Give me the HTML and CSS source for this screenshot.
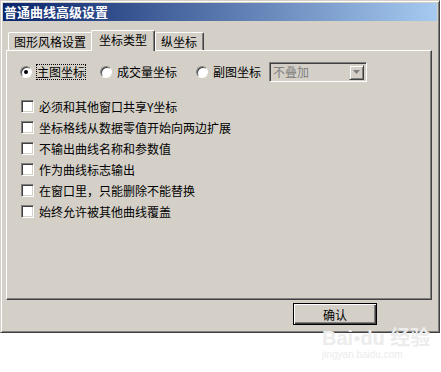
FILE: index.html
```html
<!DOCTYPE html>
<html lang="zh">
<head>
<meta charset="utf-8">
<link rel="stylesheet" href="styles.css">
</head>
<body>
<div class="window">
  <div class="titlebar">普通曲线高级设置</div>
  <div class="body">
    <div class="tabs">
      <div class="tab">图形风格设置</div>
      <div class="tab active">坐标类型</div>
      <div class="tab">纵坐标</div>
    </div>
    <div class="panel">
      <div class="radio-row">
        <label class="radio checked"><span class="dot"></span><span class="lbl focus">主图坐标</span></label>
        <label class="radio"><span class="dot"></span><span class="lbl">成交量坐标</span></label>
        <label class="radio"><span class="dot"></span><span class="lbl">副图坐标</span></label>
        <div class="select">
          <span class="sel-text">不叠加</span>
          <span class="sel-btn"><svg width="7" height="4" viewBox="0 0 7 4"><path d="M0 0h7L3.5 4z" fill="#808080"/></svg></span>
        </div>
      </div>
      <div class="checks">
        <label class="check"><span class="box"></span>必须和其他窗口共享Y坐标</label>
        <label class="check"><span class="box"></span>坐标格线从数据零值开始向两边扩展</label>
        <label class="check"><span class="box"></span>不输出曲线名称和参数值</label>
        <label class="check"><span class="box"></span>作为曲线标志输出</label>
        <label class="check"><span class="box"></span>在窗口里，只能删除不能替换</label>
        <label class="check"><span class="box"></span>始终允许被其他曲线覆盖</label>
      </div>
    </div>
    <div class="footer">
      <button class="btn">确认</button>
    </div>
  </div>
</div>
<div class="watermark">
  <div class="wm-logo">Bai<span class="paw">●</span>du 经验</div>
  <div class="wm-url">jingyan.baidu.com</div>
</div>
</body>
</html>
```
FILE: styles.css
```css
html, body {
  margin: 0;
  padding: 0;
  background: #ffffff;
  width: 441px;
  height: 372px;
  overflow: hidden;
  font-family: "Noto Sans CJK SC", "DejaVu Sans", sans-serif;
  font-size: 12px;
  color: #000;
  position: relative;
}

.window {
  width: 440px;
  height: 333px;
  box-sizing: border-box;
  background: #d4d0c8;
  border: 1px solid;
  border-color: #d4d0c8 #404040 #404040 #d4d0c8;
  box-shadow: inset 1px 1px #ffffff, inset -1px -1px #808080;
  padding: 2px;
  display: flex;
  flex-direction: column;
}

.titlebar {
  height: 18px;
  line-height: 18px;
  background: linear-gradient(to right, #0a246a, #a6caf0);
  color: #ffffff;
  font-weight: bold;
  font-size: 13px;
  padding-left: 1px;
  flex: none;
}

.body {
  flex: 1;
  padding: 9px 4px 0 3px;
  display: flex;
  flex-direction: column;
}

.tabs {
  display: flex;
  align-items: flex-end;
  height: 20px;
  padding-left: 2px;
  position: relative;
  z-index: 2;
}

.tab {
  height: 18px;
  line-height: 17px;
  box-sizing: border-box;
  border-top: 1px solid #ffffff;
  border-left: 1px solid #ffffff;
  border-right: 1px solid #404040;
  box-shadow: inset -1px 0 #808080;
  border-radius: 2px 2px 0 0;
  padding: 0 6px 0 5px;
  font-size: 12px;
  background: #d4d0c8;
}

.tab.active {
  height: 21px;
  margin: 0 -2px -1px -2px;
  padding: 0 7px 0 7px;
  line-height: 18px;
  position: relative;
  z-index: 3;
}

.tab.active + .tab {
  margin-left: 2px;
}

.panel {
  width: 426px;
  height: 250px;
  box-sizing: border-box;
  border: 1px solid;
  border-color: #ffffff #404040 #404040 #ffffff;
  box-shadow: inset -1px -1px #808080;
  padding: 11px 0 0 13px;
  position: relative;
  z-index: 1;
}

.radio-row {
  display: flex;
  align-items: center;
  height: 20px;
}

.radio {
  display: flex;
  align-items: center;
  margin-right: 15px;
}

.radio:nth-child(2) { margin-right: 19px; }
.radio:nth-child(3) { margin-right: 8px; }

.dot {
  width: 12px;
  height: 12px;
  box-sizing: border-box;
  border-radius: 50%;
  background: #ffffff;
  border: 1px solid;
  border-color: #808080 #ffffff #ffffff #808080;
  box-shadow: inset 1px 1px #404040;
  margin-right: 5px;
  position: relative;
}

.radio.checked .dot::after {
  content: "";
  position: absolute;
  left: 3px;
  top: 3px;
  width: 4px;
  height: 4px;
  border-radius: 50%;
  background: #000;
}

.lbl {
  line-height: 14px;
}

.lbl.focus {
  outline: 1px dotted #000;
}

.select {
  width: 98px;
  height: 20px;
  box-sizing: border-box;
  border: 1px solid;
  border-color: #808080 #ffffff #ffffff #808080;
  box-shadow: inset 1px 1px #404040;
  background: #d4d0c8;
  display: flex;
  align-items: center;
  padding: 2px 2px 2px 3px;
}

.sel-text {
  flex: 1;
  color: #808080;
  line-height: 14px;
}

.sel-btn {
  width: 15px;
  height: 15px;
  box-sizing: border-box;
  border: 1px solid;
  border-color: #d4d0c8 #404040 #404040 #d4d0c8;
  box-shadow: inset 1px 1px #ffffff, inset -1px -1px #808080;
  display: flex;
  align-items: center;
  justify-content: center;
}

.checks {
  margin-top: 14px;
  display: flex;
  flex-direction: column;
}

.check {
  display: flex;
  align-items: center;
  height: 21px;
  line-height: 14px;
}

.box {
  width: 13px;
  height: 13px;
  box-sizing: border-box;
  background: #ffffff;
  border: 1px solid;
  border-color: #808080 #ffffff #ffffff #808080;
  box-shadow: inset 1px 1px #404040, inset -1px -1px #d4d0c8;
  margin: 0 5px 0 1px;
}

.footer {
  display: flex;
  justify-content: flex-end;
  padding: 3px 56px 0 0;
}

.btn {
  width: 84px;
  height: 22px;
  box-sizing: border-box;
  background: #d4d0c8;
  border: 1px solid #000;
  box-shadow: inset 1px 1px #ffffff, inset -1px -1px #404040, inset -2px -2px #808080;
  font-family: "Noto Sans CJK SC", sans-serif;
  font-size: 12px;
  padding: 0;
  color: #000;
}

.watermark {
  position: absolute;
  left: 322px;
  top: 326px;
  color: #ececec;
  font-family: "Liberation Sans", "Noto Sans CJK SC", sans-serif;
}

.wm-logo {
  font-size: 20px;
  font-weight: bold;
  line-height: 24px;
}

.paw {
  font-size: 12px;
  vertical-align: top;
}

.wm-url {
  font-size: 10px;
  line-height: 10px;
}
```
